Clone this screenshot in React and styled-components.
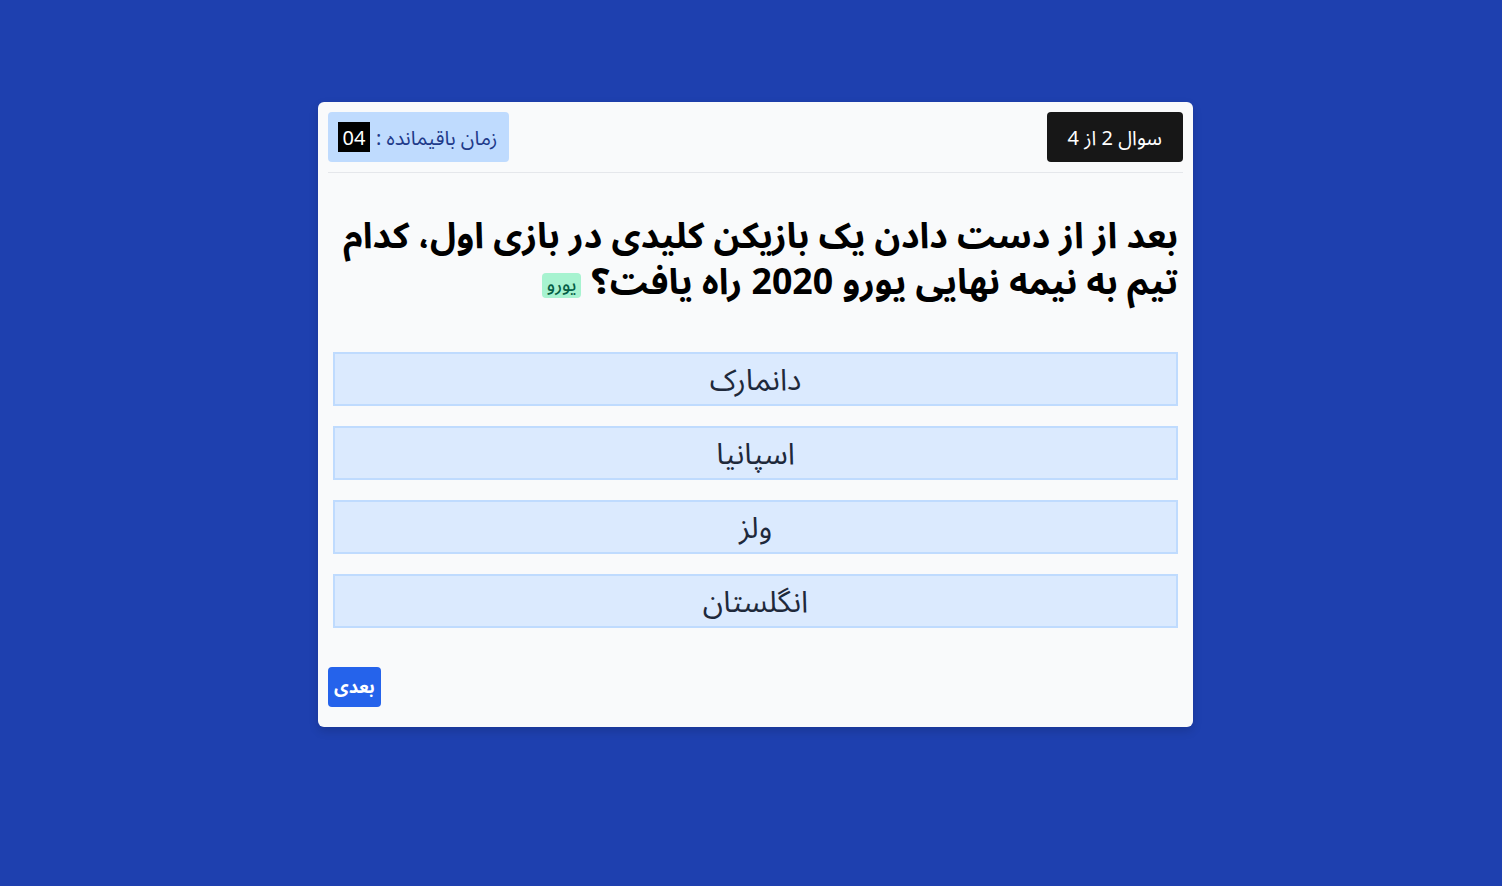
import React from "react";
import styled, { createGlobalStyle } from "styled-components";

const Global = createGlobalStyle`
  html, body { margin: 0; padding: 0; }
  body {
    background: #1e40af;
    font-family: "Noto Sans Arabic", "Noto Sans", sans-serif;
    min-height: 100vh;
  }
`;

const Page = styled.div`
  display: flex;
  justify-content: center;
  padding-top: 102px;
  padding-left: 9px;
`;

const Card = styled.div`
  direction: rtl;
  width: 875px;
  box-sizing: border-box;
  background: #f9fafb;
  border-radius: 6px;
  padding: 10px 10px 20px;
  box-shadow: 0 4px 10px rgba(0, 0, 0, 0.15);
`;

const Header = styled.div`
  display: flex;
  justify-content: space-between;
  align-items: center;
  padding-bottom: 10px;
  border-bottom: 1px solid #e5e7eb;
`;

const Counter = styled.div`
  height: 50px;
  box-sizing: border-box;
  padding: 3px 21px 0;
  display: flex;
  align-items: center;
  background: #171717;
  color: #fff;
  border-radius: 4px;
  font-size: 20px;
`;

const Timer = styled.div`
  height: 50px;
  box-sizing: border-box;
  padding: 0 12px 0 10px;
  display: flex;
  align-items: center;
  gap: 6px;
  background: #bfdbfe;
  color: #1e3a8a;
  border-radius: 4px;
  font-size: 20px;
`;

const TimerLabel = styled.span`
  padding-top: 3px;
`;

const TimeBox = styled.span`
  display: inline-flex;
  align-items: center;
  justify-content: center;
  width: 32px;
  height: 30px;
  background: #000;
  color: #fff;
  font-size: 20px;
  direction: ltr;
  font-family: "Noto Sans", sans-serif;
`;

const Question = styled.h2`
  margin: 41px 5px 46px 5px;
  font-size: 35.7px;
  line-height: 46px;
  font-weight: bold;
  color: #000;
  text-align: right;
`;

const Tag = styled.span`
  display: inline-block;
  background: #a7f3d0;
  color: #065f46;
  font-size: 18px;
  font-weight: 500;
  line-height: 20px;
  padding: 2px 5px 3px;
  border-radius: 4px;
  vertical-align: 3px;
  margin-right: 10px;
`;

const Options = styled.div`
  display: flex;
  flex-direction: column;
  gap: 20px;
  padding: 0 5px;
`;

const Option = styled.button`
  height: 54px;
  box-sizing: border-box;
  border: 2px solid #bfdbfe;
  background: #dbeafe;
  color: #1e293b;
  font-family: inherit;
  font-size: 30px;
  display: flex;
  align-items: center;
  justify-content: center;
  cursor: pointer;
  padding: 2px 0 0;
`;

const Footer = styled.div`
  display: flex;
  justify-content: flex-end;
  margin-top: 39px;
`;

const NextButton = styled.button`
  height: 40px;
  padding: 0 6px;
  background: #2563eb;
  color: #fff;
  border: none;
  border-radius: 4px;
  font-family: inherit;
  font-weight: bold;
  font-size: 18px;
  cursor: pointer;
`;

const options = ["دانمارک", "اسپانیا", "ولز", "انگلستان"];

export default function App() {
  return (
    <>
      <Global />
      <Page>
        <Card>
          <Header>
            <Counter>سوال 2 از 4</Counter>
            <Timer>
              <TimerLabel>زمان باقیمانده :</TimerLabel>
              <TimeBox>04</TimeBox>
            </Timer>
          </Header>
          <Question>
            بعد از از دست دادن یک بازیکن کلیدی در بازی اول، کدام تیم به نیمه نهایی یورو 2020 راه یافت؟
            <Tag>یورو</Tag>
          </Question>
          <Options>
            {options.map((o) => (
              <Option key={o}>{o}</Option>
            ))}
          </Options>
          <Footer>
            <NextButton>بعدی</NextButton>
          </Footer>
        </Card>
      </Page>
    </>
  );
}
